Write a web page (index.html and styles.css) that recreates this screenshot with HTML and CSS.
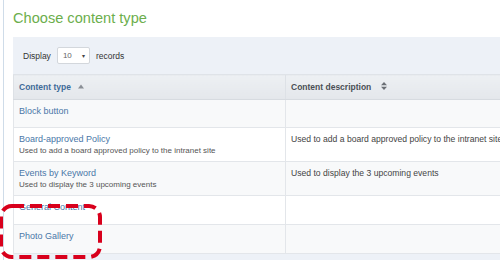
FILE: index.html
```html
<!DOCTYPE html>
<html>
  <head lang="en">
    <meta charset="UTF-8" />
    <title>Choose content type</title>
    <link rel="stylesheet" href="styles.css">
  </head>

  <body>
    <div class="page">
      <h1 class="title">Choose content type</h1>
      <div class="panel">
        <div class="toolbar">
          <span>Display</span>
          <div class="select">
            <span class="val">10</span>
            <span class="caret">&#9662;</span>
          </div>
          <span>records</span>
        </div>
        <table class="grid">
          <thead>
            <tr>
              <th class="col1">Content type
                <svg class="sort" width="6" height="5" viewBox="0 0 6 5"><path d="M0 4.5 L3 0.5 L6 4.5 Z" fill="#8a8f96"/></svg>
              </th>
              <th>Content description
                <svg class="sort both" width="6" height="8" viewBox="0 0 6 8"><path d="M0 3.3 L3 0 L6 3.3 Z M0 4.7 L3 8 L6 4.7 Z" fill="#6b6f75"/></svg>
              </th>
            </tr>
          </thead>
          <tbody>
            <tr>
              <td><a href="#">Block button</a></td>
              <td></td>
            </tr>
            <tr>
              <td><a href="#">Board-approved Policy</a><div class="sub">Used to add a board approved policy to the intranet site</div></td>
              <td class="desc">Used to add a board approved policy to the intranet site</td>
            </tr>
            <tr>
              <td><a href="#">Events by Keyword</a><div class="sub">Used to display the 3 upcoming events</div></td>
              <td class="desc">Used to display the 3 upcoming events</td>
            </tr>
            <tr>
              <td><a href="#">General Content</a></td>
              <td></td>
            </tr>
            <tr>
              <td><a href="#">Photo Gallery</a></td>
              <td></td>
            </tr>
          </tbody>
        </table>
      </div>
    </div>
    <!-- red callout drawn over the last rows -->
    <svg class="callout" width="110" height="60" viewBox="0 0 110 60">
      <rect x="2" y="2" width="99" height="51" rx="11" ry="11" fill="none" stroke="#d8001c" stroke-width="4" stroke-dasharray="12 6"/>
    </svg>
  </body>
</html>
```

FILE: styles.css
```css
body {
  margin: 0;
  font-family: "Liberation Sans", Arial, sans-serif;
  background: #fff;
  overflow: hidden;
  position: relative;
}

.page {
  margin-left: 3px;
  border-left: 1px solid #cfdce9;
  padding-left: 9px;
  height: 260px;
}

.title {
  margin: 0;
  padding-top: 8px;
  height: 20px;
  line-height: 20px;
  margin-bottom: 9px;
  font-size: 14.6px;
  font-weight: normal;
  color: #6cae4c;
}

.panel {
  background: #edf1f7;
  height: 230px;
  overflow: hidden;
}

.toolbar {
  display: flex;
  align-items: center;
  height: 37px;
  padding-left: 10px;
  font-size: 8.5px;
  color: #333;
}

.select {
  display: flex;
  align-items: center;
  justify-content: space-between;
  width: 33px;
  height: 17px;
  box-sizing: border-box;
  margin: 0 6px;
  padding: 0 4px 0 5px;
  background: #fff;
  border: 1px solid #d3d7dc;
  border-radius: 2px;
  font-size: 8px;
  color: #666;
}

.select .caret {
  font-size: 6px;
  color: #444;
}

.grid {
  border-collapse: collapse;
  width: 560px;
  table-layout: fixed;
  font-size: 9px;
}

.grid th {
  height: 24px;
  padding: 0 5px;
  text-align: left;
  font-size: 8.5px;
  font-weight: bold;
  color: #3e6a98;
  background: linear-gradient(#edf0f3, #e4e7eb);
  border-top: 1px solid #dfe3e8;
  border-bottom: 1px solid #d7dbe0;
  border-left: 1px solid #dde1e6;
}

.grid th + th {
  color: #4a4f55;
}

.grid .col1 {
  width: 261px;
}

.sort {
  margin-left: 5px;
  vertical-align: 1px;
}

.sort.both {
  margin-left: 7px;
  vertical-align: 0;
}

.grid td {
  padding: 6px 5px 5px;
  vertical-align: top;
  border-left: 1px solid #e3e6ea;
  border-bottom: 1px solid #e3e6ea;
  line-height: 11px;
}

.grid tbody tr {
  height: 28px;
}

.grid tbody tr:nth-child(n+4) {
  height: 29px;
}

.grid tbody tr:nth-child(odd) td {
  background: #f8f9fa;
}

.grid tbody tr:nth-child(even) td {
  background: #fff;
}

.grid a {
  color: #4a77a8;
  text-decoration: none;
}

.sub {
  font-size: 8px;
  line-height: 11px;
  color: #555;
}

.desc {
  font-size: 8.6px;
  color: #444;
}

.callout {
  position: absolute;
  left: -1px;
  top: 204px;
}
```
